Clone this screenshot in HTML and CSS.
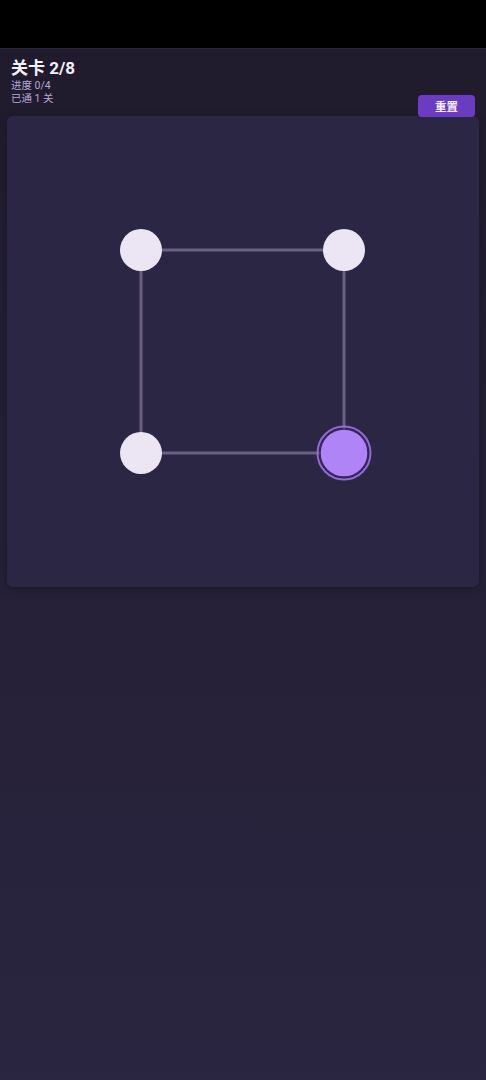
FILE: index.html
```html
<!DOCTYPE html>
<html lang="zh-CN">
<head>
    <meta charset="UTF-8">
    <meta name="viewport" content="width=device-width, initial-scale=1.0">
    <title>关卡</title>
    <link rel="stylesheet" href="styles.css">
</head>
<body>

<div class="status-bar"></div>

<div class="screen">
    <!-- 顶部信息 -->
    <div class="header">
        <div class="info">
            <div class="title">关卡 2/8</div>
            <div class="sub">进度 0/4</div>
            <div class="sub">已通 1 关</div>
        </div>
        <button class="reset-btn">重置</button>
    </div>

    <!-- 棋盘 -->
    <div class="board">
        <svg class="board-svg" width="472" height="471" viewBox="0 0 472 471">
            <g class="edges">
                <line x1="134" y1="134" x2="337" y2="134"></line>
                <line x1="134" y1="134" x2="134" y2="337"></line>
                <line x1="337" y1="134" x2="337" y2="337"></line>
                <line x1="134" y1="337" x2="337" y2="337"></line>
            </g>
            <circle class="node" cx="134" cy="134" r="21"></circle>
            <circle class="node" cx="337" cy="134" r="21"></circle>
            <circle class="node" cx="134" cy="337" r="21"></circle>
            <circle class="ring" cx="337" cy="337" r="26.5"></circle>
            <circle class="node active" cx="337" cy="337" r="24"></circle>
        </svg>
    </div>
</div>

</body>
</html>
```

FILE: styles.css
```css
body {
    margin: 0;
    font-family: Roboto, "Noto Sans CJK SC", sans-serif;
    background: linear-gradient(#1f1b2c, #2a2540);
    min-height: 1080px;
    color: #fff;
}

.status-bar {
    height: 49px;
    background-color: #000;
    border-bottom: 1px solid #2a2638;
    box-sizing: border-box;
}

.screen {
    padding: 0 7px;
}

.header {
    display: flex;
    justify-content: space-between;
    align-items: flex-end;
    padding: 0 4px;
    height: 67px;
    box-sizing: border-box;
}

.info {
    display: flex;
    flex-direction: column;
    padding-bottom: 11px;
}

.title {
    font-size: 17px;
    font-weight: bold;
    color: #f4f0fa;
    line-height: 22px;
}

.sub {
    font-size: 10.5px;
    color: #b6a6d6;
    line-height: 13px;
}

.reset-btn {
    width: 57px;
    height: 22px;
    border: none;
    border-radius: 4px;
    background-color: #6a3cc2;
    color: #f2ecff;
    font-family: Roboto, "Noto Sans CJK SC", sans-serif;
    font-size: 11.5px;
    font-weight: bold;
    padding: 0;
    margin-bottom: -1px;
}

.board {
    height: 471px;
    background-color: #2b2644;
    border-radius: 6px;
    box-shadow: 0 2px 8px rgba(0, 0, 0, 0.25);
}

.board-svg {
    display: block;
}

.edges line {
    stroke: #6a6082;
    stroke-width: 3;
}

.node {
    fill: #ebe5f4;
}

.node.active {
    fill: #ae84f6;
    stroke: #3c2566;
    stroke-width: 1.5;
}

.ring {
    fill: none;
    stroke: #8e6cd4;
    stroke-width: 2;
}
```
